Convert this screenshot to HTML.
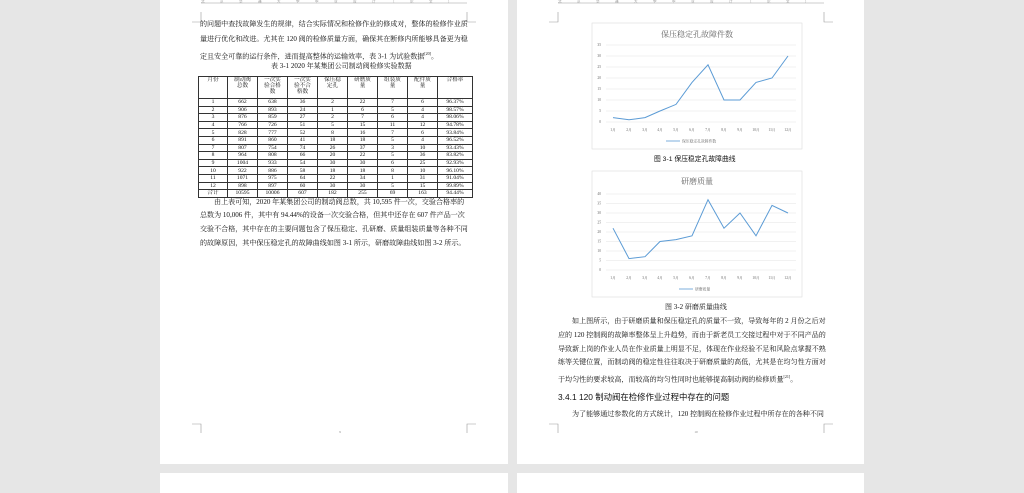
<!DOCTYPE html><html><head><meta charset="utf-8"><style>
body{margin:0;width:1024px;height:483px;background:#e6e6e6;position:relative;overflow:hidden;font-family:"Liberation Serif","Noto Serif CJK SC",serif;color:#111}
.pg{position:absolute;background:#fff}
.t{position:absolute;font-size:7.05px;white-space:nowrap;line-height:9px}
table{position:absolute;left:198px;top:76px;width:274px;border-collapse:collapse;font-size:5.6px;line-height:6px;text-align:center;table-layout:fixed}
td{border:0.7px solid #333;padding:0;height:6.6px;overflow:hidden}
.h td{height:21px;vertical-align:top}
</style></head><body>
<div class="pg" style="left:160px;top:0;width:348px;height:464px"></div>
<div class="pg" style="left:517px;top:0;width:347px;height:464px"></div>
<div class="pg" style="left:160px;top:473px;width:348px;height:20px"></div>
<div class="pg" style="left:517px;top:473px;width:347px;height:20px"></div>
<svg width="1024" height="483" style="position:absolute;left:0;top:0">
<g stroke="#999" stroke-width="0.6" fill="none">
<path d="M201 3H467M558 3H824"/>
<path d="M201 12V22H192M467 12V22H476M558 12V22H549M824 12V22H833"/>
<path d="M549 424H558V433M833 424H824V433M192 424H201V433M476 424H467V433"/>
</g>
<g font-size="3.5" fill="#999" font-family="Liberation Sans,Noto Sans CJK SC,sans-serif" letter-spacing="15.5">
<text x="201" y="2.5">北京交通大学毕业设计（论文）</text>
<text x="558" y="2.5">北京交通大学毕业设计（论文）</text></g>
<rect x="592" y="23" width="210" height="126" fill="#fff" stroke="#ddd" stroke-width="0.6"/>
<rect x="592" y="171" width="210" height="126" fill="#fff" stroke="#ddd" stroke-width="0.6"/>
<text x="697" y="37" font-size="8" fill="#666" text-anchor="middle">保压稳定孔故障件数</text>
<text x="697" y="184" font-size="8" fill="#666" text-anchor="middle">研磨质量</text>
<g stroke="#e3e3e3" stroke-width="0.5">
<path d="M606 122H796M606 111H796M606 100H796M606 89H796M606 78H796M606 67H796M606 56H796M606 45H796"/>
<path d="M606 270H796M606 260.5H796M606 251H796M606 241.5H796M606 232H796M606 222.5H796M606 213H796M606 203.5H796M606 194H796"/>
</g>
<g font-size="3.6" fill="#666" text-anchor="end">
<text x="601" y="123">0</text><text x="601" y="112">5</text><text x="601" y="101">10</text><text x="601" y="90">15</text><text x="601" y="79">20</text><text x="601" y="68">25</text><text x="601" y="57">30</text><text x="601" y="46">35</text>
<text x="601" y="271">0</text><text x="601" y="261.5">5</text><text x="601" y="252">10</text><text x="601" y="242.5">15</text><text x="601" y="233">20</text><text x="601" y="223.5">25</text><text x="601" y="214">30</text><text x="601" y="204.5">35</text><text x="601" y="195">40</text>
</g>
<g font-size="3.6" fill="#666" text-anchor="middle">
<text x="613" y="131">1月</text><text x="629" y="131">2月</text><text x="645" y="131">3月</text><text x="660" y="131">4月</text><text x="676" y="131">5月</text><text x="692" y="131">6月</text><text x="708" y="131">7月</text><text x="724" y="131">8月</text><text x="740" y="131">9月</text><text x="756" y="131">10月</text><text x="772" y="131">11月</text><text x="788" y="131">12月</text>
<text x="613" y="279">1月</text><text x="629" y="279">2月</text><text x="645" y="279">3月</text><text x="660" y="279">4月</text><text x="676" y="279">5月</text><text x="692" y="279">6月</text><text x="708" y="279">7月</text><text x="724" y="279">8月</text><text x="740" y="279">9月</text><text x="756" y="279">10月</text><text x="772" y="279">11月</text><text x="788" y="279">12月</text>
</g>
<polyline fill="none" stroke="#5b9bd5" stroke-width="1" points="613,117.6 629,119.8 645,117.6 660,111 676,104.4 692,82.4 708,64.8 724,100 740,100 756,82.4 772,78 788,56"/>
<path d="M666 141H680" stroke="#5b9bd5" stroke-width="0.8"/>
<text x="682" y="142.5" font-size="3.8" fill="#666">保压稳定孔故障件数</text>
<polyline fill="none" stroke="#5b9bd5" stroke-width="1" points="613,228.2 629,258.6 645,256.7 660,241.5 676,239.6 692,235.8 708,199.7 724,228.2 740,213 756,235.8 772,205.4 788,213"/>
<path d="M679 289H693" stroke="#5b9bd5" stroke-width="0.8"/>
<text x="695" y="290.5" font-size="3.8" fill="#666">研磨质量</text>
<text x="696" y="433" font-size="3.5" fill="#888" text-anchor="middle">10</text>
<text x="340" y="433" font-size="3.5" fill="#888" text-anchor="middle">9</text>
</svg>
<div class="t" style="left:200px;top:20px">的问题中查找故障发生的规律，结合实际情况和检修作业的修成对，整体的检修作业质</div>
<div class="t" style="left:200px;top:35px">量进行优化和改进。尤其在 120 阀的检修质量方面，确保其在断修内所能够具备更为稳</div>
<div class="t" style="left:200px;top:49px">定且安全可靠的运行条件，进而提高整体的运输效率，表 3-1 为试验数据<sup style="font-size:4px">[20]</sup>。</div>
<div class="t" style="left:271px;top:62px;font-size:7px">表 3-1 2020 年某集团公司制动阀检修实验数据</div>
<table>
<colgroup><col style="width:29px"><col style="width:30px"><col style="width:30px"><col style="width:30px"><col style="width:30px"><col style="width:30px"><col style="width:30px"><col style="width:30px"><col style="width:35px"></colgroup>
<tr class="h"><td>月份</td><td>制动阀<br>总数</td><td>一次实<br>验合格<br>数</td><td>一次实<br>验不合<br>格数</td><td>保压稳<br>定孔</td><td>研磨质<br>量</td><td>组装质<br>量</td><td>配件质<br>量</td><td>合格率</td></tr>
<tr><td>1</td><td>662</td><td>638</td><td>36</td><td>2</td><td>22</td><td>7</td><td>6</td><td>96.37%</td></tr>
<tr><td>2</td><td>906</td><td>893</td><td>24</td><td>1</td><td>6</td><td>5</td><td>4</td><td>98.57%</td></tr>
<tr><td>3</td><td>876</td><td>859</td><td>27</td><td>2</td><td>7</td><td>6</td><td>4</td><td>98.06%</td></tr>
<tr><td>4</td><td>766</td><td>726</td><td>51</td><td>5</td><td>15</td><td>11</td><td>12</td><td>94.78%</td></tr>
<tr><td>5</td><td>828</td><td>777</td><td>52</td><td>8</td><td>16</td><td>7</td><td>6</td><td>93.84%</td></tr>
<tr><td>6</td><td>891</td><td>860</td><td>41</td><td>18</td><td>18</td><td>5</td><td>4</td><td>96.52%</td></tr>
<tr><td>7</td><td>807</td><td>754</td><td>74</td><td>26</td><td>37</td><td>3</td><td>10</td><td>93.43%</td></tr>
<tr><td>8</td><td>964</td><td>808</td><td>66</td><td>20</td><td>22</td><td>5</td><td>36</td><td>83.82%</td></tr>
<tr><td>9</td><td>1004</td><td>933</td><td>54</td><td>30</td><td>30</td><td>6</td><td>25</td><td>92.93%</td></tr>
<tr><td>10</td><td>922</td><td>886</td><td>58</td><td>18</td><td>18</td><td>8</td><td>10</td><td>96.10%</td></tr>
<tr><td>11</td><td>1071</td><td>975</td><td>64</td><td>22</td><td>34</td><td>1</td><td>31</td><td>91.04%</td></tr>
<tr><td>12</td><td>898</td><td>897</td><td>60</td><td>30</td><td>30</td><td>5</td><td>15</td><td>99.89%</td></tr>
<tr><td>合计</td><td>10595</td><td>10006</td><td>607</td><td>182</td><td>255</td><td>69</td><td>163</td><td>94.44%</td></tr>
</table>
<div class="t" style="left:214px;top:198px">由上表可知，2020 年某集团公司的制动阀总数，共 10,595 件一次，交验合格率的</div>
<div class="t" style="left:200px;top:211px">总数为 10,006 件，其中有 94.44%的设备一次交验合格，但其中还存在 607 件产品一次</div>
<div class="t" style="left:200px;top:225px">交验不合格，其中存在的主要问题包含了保压稳定、孔研磨、质量组装质量等各种不同</div>
<div class="t" style="left:200px;top:239px">的故障原因，其中保压稳定孔的故障曲线如图 3-1 所示，研磨故障曲线如图 3-2 所示。</div>
<div class="t" style="left:654px;top:155px;font-family:'Liberation Sans','Noto Sans CJK SC',sans-serif;font-size:6.8px">图 3-1 保压稳定孔故障曲线</div>
<div class="t" style="left:665px;top:303px;font-size:7px">图 3-2 研磨质量曲线</div>
<div class="t" style="left:572px;top:317px">如上图所示，由于研磨质量和保压稳定孔的质量不一致，导致每年的 2 月份之后对</div>
<div class="t" style="left:558px;top:331px">应的 120 控制阀的故障率整体呈上升趋势，而由于新老员工交接过程中对于不同产品的</div>
<div class="t" style="left:558px;top:345px">导致新上岗的作业人员在作业质量上明显不足，体现在作业经验不足和风险点掌握不熟</div>
<div class="t" style="left:558px;top:358px">练等关键位置，而制动阀的稳定性往往取决于研磨质量的高低，尤其是在均匀性方面对</div>
<div class="t" style="left:558px;top:372px">于均匀性的要求较高，而较高的均匀性同时也能够提高制动阀的检修质量<sup style="font-size:4px">[21]</sup>。</div>
<div class="t" style="left:558px;top:393px;font-size:8.4px;font-family:'Liberation Sans','Noto Sans CJK SC',sans-serif">3.4.1 120 制动阀在检修作业过程中存在的问题</div>
<div class="t" style="left:572px;top:410px">为了能够通过参数化的方式统计，120 控制阀在检修作业过程中所存在的各种不同</div>
</body></html>
